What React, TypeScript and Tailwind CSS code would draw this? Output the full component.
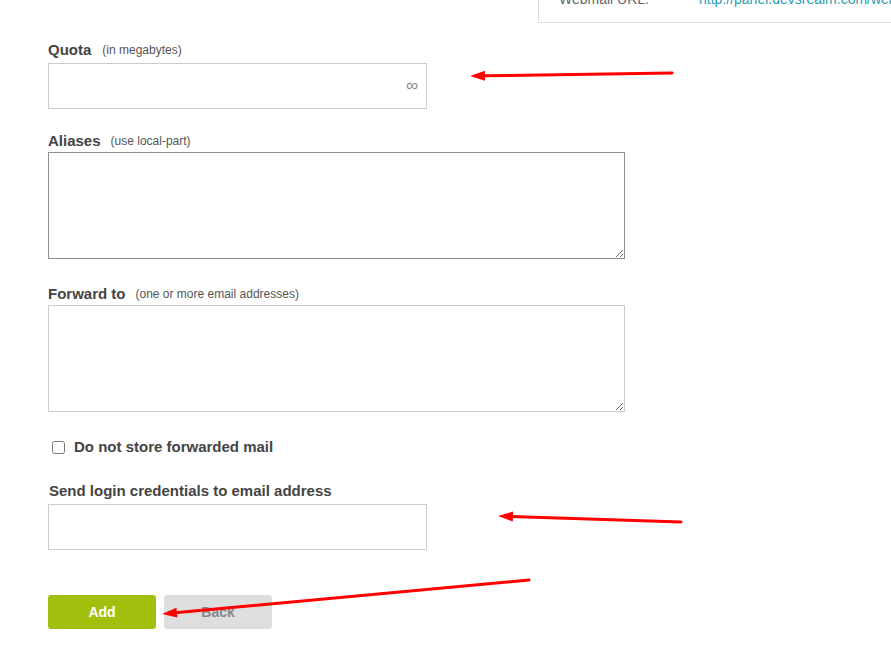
import React from "react";

function Arrow({ x1, y1, x2, y2 }: { x1: number; y1: number; x2: number; y2: number }) {
  const dx = x2 - x1;
  const dy = y2 - y1;
  const len = Math.sqrt(dx * dx + dy * dy);
  const ux = dx / len;
  const uy = dy / len;
  const hl = 15;
  const hw = 5;
  const bx = x2 - ux * hl;
  const by = y2 - uy * hl;
  const px = -uy;
  const py = ux;
  const pts = `${x2},${y2} ${bx + px * hw},${by + py * hw} ${bx - px * hw},${by - py * hw}`;
  return (
    <g>
      <line x1={x1} y1={y1} x2={bx + ux * 2} y2={by + uy * 2} stroke="#ff0000" strokeWidth={3} strokeLinecap="round" />
      <polygon points={pts} fill="#ff0000" />
    </g>
  );
}

export default function App() {
  return (
    <div className="relative w-[891px] h-[653px] overflow-hidden bg-white" style={{ fontFamily: '"Liberation Sans", Arial, sans-serif' }}>
      <div className="flex">
        <div className="-mt-[12px] ml-[538px] flex-1 min-w-0 overflow-hidden h-[35px] border-l border-b border-[#dddddd] pt-[3px] pl-[20px] flex text-[14px] leading-[16px] whitespace-nowrap">
          <span className="w-[140px] shrink-0 text-[#666666]">Webmail URL:</span>
          <span className="shrink-0 text-[#2a9db3]">http://panel.devsrealm.com/webmail</span>
        </div>
      </div>

      <div className="pl-[48px] flex flex-col">
        <div className="mt-[17px] mb-[3px] h-[20px] flex items-center text-[#444444]">
          <span className="text-[15px] font-bold">Quota</span>
          <span className="text-[12px] ml-[11px] text-[#555555]">(in megabytes)</span>
        </div>
        <div className="relative w-[379px] h-[46px] border border-[#cccccc]">
          <span className="absolute right-[8px] top-[9px] text-[17px] text-[#888888]">∞</span>
        </div>

        <div className="mt-[22px] mb-[1px] h-[20px] flex items-center text-[#444444]">
          <span className="text-[15px] font-bold">Aliases</span>
          <span className="text-[12px] ml-[10px] text-[#555555]">(use local-part)</span>
        </div>
        <textarea className="w-[577px] h-[107px] border border-[#8f8f8f] block" />

        <div className="mt-[25px] mb-[1px] h-[20px] flex items-center text-[#444444]">
          <span className="text-[15px] font-bold">Forward to</span>
          <span className="text-[12px] ml-[10px] text-[#555555]">(one or more email addresses)</span>
        </div>
        <textarea className="w-[577px] h-[107px] border border-[#cccccc] block" />

        <div className="mt-[25px] h-[20px] flex items-center">
          <input type="checkbox" className="ml-[4px] w-[13px] h-[13px] m-0" />
          <span className="ml-[9px] text-[15px] font-bold text-[#444444]">Do not store forwarded mail</span>
        </div>

        <div className="mt-[24px] mb-[3px] h-[20px] flex items-center pl-[1px] text-[15px] font-bold text-[#444444]">
          Send login credentials to email address
        </div>
        <div className="w-[379px] h-[46px] border border-[#cccccc]" />

        <div className="mt-[45px] flex gap-[8px]">
          <button className="w-[108px] h-[34px] rounded-[3px] bg-[#a2bf0e] text-white text-[14px] font-bold">Add</button>
          <button className="w-[108px] h-[34px] rounded-[3px] bg-[#dedede] text-[#888888] text-[14px] font-bold">Back</button>
        </div>
      </div>

      <svg className="absolute inset-0 pointer-events-none" width={891} height={653}>
        <Arrow x1={672} y1={73} x2={470} y2={76} />
        <Arrow x1={681} y1={522} x2={498} y2={516} />
        <Arrow x1={529} y1={580} x2={162} y2={614} />
      </svg>
    </div>
  );
}
